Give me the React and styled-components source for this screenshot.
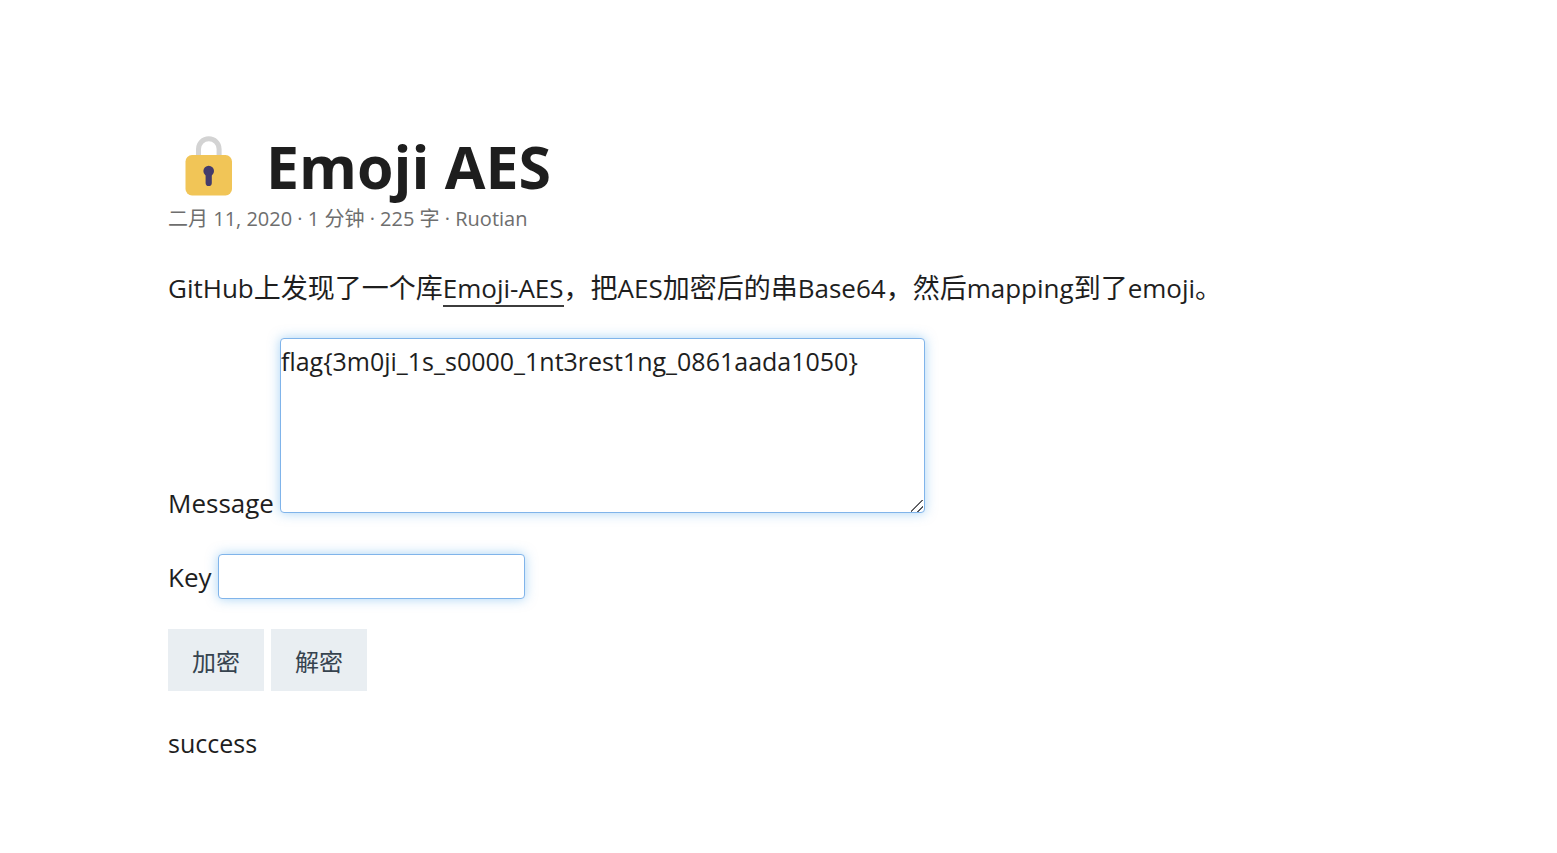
import React, { useState } from 'react'
import styled, { createGlobalStyle } from 'styled-components'

const GlobalStyle = createGlobalStyle`
  * {
    box-sizing: border-box;
  }

  body {
    margin: 0;
    background: #fff;
    color: #1e1e1e;
    font-family: 'Open Sans', 'Noto Sans CJK SC', sans-serif;
    font-size: 26px;
    line-height: 40px;
  }
`

const Post = styled.article`
  max-width: 1221px;
  margin: 0 auto;
  padding: 130px 0 80px;
`

const Title = styled.h1`
  display: flex;
  align-items: center;
  gap: 18px;
  margin: 0;
  font-size: 59px;
  font-weight: 700;
  line-height: 72px;
`

const LockIcon = styled.svg`
  width: 80px;
  height: 72px;
`

const Meta = styled.div`
  margin-bottom: 32px;
  color: #6e6e6e;
  font-size: 20px;
  line-height: 34px;
`

const Paragraph = styled.p`
  margin: 0 0 30px;
  font-size: 27px;
`

const Latin = styled.span`
  font-size: 26px;
`

const Link = styled.a`
  display: inline-block;
  border-bottom: 2px solid #3c3c3c;
  color: inherit;
  font-size: 26px;
  line-height: 34px;
  text-decoration: none;
`

const Field = styled.div`
  display: flex;
  align-items: ${props => props.$align || 'center'};
  gap: 6px;
  margin-bottom: ${props => props.$space}px;
`

const Label = styled.label`
  line-height: 20px;
`

const TextArea = styled.textarea`
  width: 645px;
  height: 175px;
  padding: 2px 0;
  border: 1px solid #80b4ea;
  border-radius: 4px;
  outline: none;
  box-shadow: 0 0 12px rgba(82, 168, 236, 0.5);
  background: #fff;
  color: inherit;
  font: inherit;
  font-size: 25px;

  &::-webkit-resizer {
    background: linear-gradient(
        135deg,
        transparent 45%,
        #55565a 46%,
        #55565a 53%,
        transparent 54%,
        transparent 73%,
        #55565a 74%,
        #55565a 81%,
        transparent 82%
      )
      2px 3px / 12px 12px no-repeat;
  }
`

const Input = styled.input`
  width: 307px;
  height: 45px;
  padding: 0;
  border: 1px solid #80b4ea;
  border-radius: 4px;
  outline: none;
  box-shadow: 0 0 12px rgba(82, 168, 236, 0.5);
  background: #fff;
  color: inherit;
  font: inherit;
  font-size: 25px;
`

const Actions = styled.div`
  display: flex;
  gap: 7px;
  margin-bottom: 32px;
`

const Button = styled.button`
  height: 62px;
  padding: 0 24px;
  border: 0;
  background: #e9eef2;
  color: #36434f;
  font-family: inherit;
  font-size: 24px;
  cursor: pointer;
`

const Status = styled.p`
  margin: 0;
  font-size: 25px;
`

const Lock = () => (
  <LockIcon viewBox="0 0 80 72" aria-hidden="true">
    <path
      d="M30.500 28V19a10.300 10.300 0 0 1 20.600 0V28"
      fill="none"
      stroke="#d3d3d3"
      strokeWidth="5"
    />
    <rect x="17.500" y="25" width="46.500" height="40.500" rx="6.500" fill="#f1c557" />
    <circle cx="40.700" cy="41" r="5.300" fill="#433b6b" />
    <path d="M40.700 42v11" stroke="#433b6b" strokeWidth="6.200" strokeLinecap="round" />
  </LockIcon>
)

const App = () => {
  const [message, setMessage] = useState('flag{3m0ji_1s_s0000_1nt3rest1ng_0861aada1050}')
  const [key, setKey] = useState('')

  return (
    <>
      <GlobalStyle />
      <Post>
        <Title>
          <Lock />
          Emoji AES
        </Title>
        <Meta>二月 11, 2020 · 1 分钟 · 225 字 · Ruotian</Meta>
        <Paragraph>
          <Latin>GitHub</Latin>上发现了一个库<Link href="#emoji-aes">Emoji-AES</Link>，把
          <Latin>AES</Latin>加密后的串<Latin>Base64</Latin>，然后<Latin>mapping</Latin>到了
          <Latin>emoji</Latin>。
        </Paragraph>
        <Field $align="flex-end" $space={41}>
          <Label htmlFor="message">Message</Label>
          <TextArea
            id="message"
            spellCheck={false}
            value={message}
            onChange={e => setMessage(e.target.value)}
          />
        </Field>
        <Field $space={30}>
          <Label htmlFor="key">Key</Label>
          <Input id="key" type="text" value={key} onChange={e => setKey(e.target.value)} />
        </Field>
        <Actions>
          <Button type="button">加密</Button>
          <Button type="button">解密</Button>
        </Actions>
        <Status>success</Status>
      </Post>
    </>
  )
}

export default App
